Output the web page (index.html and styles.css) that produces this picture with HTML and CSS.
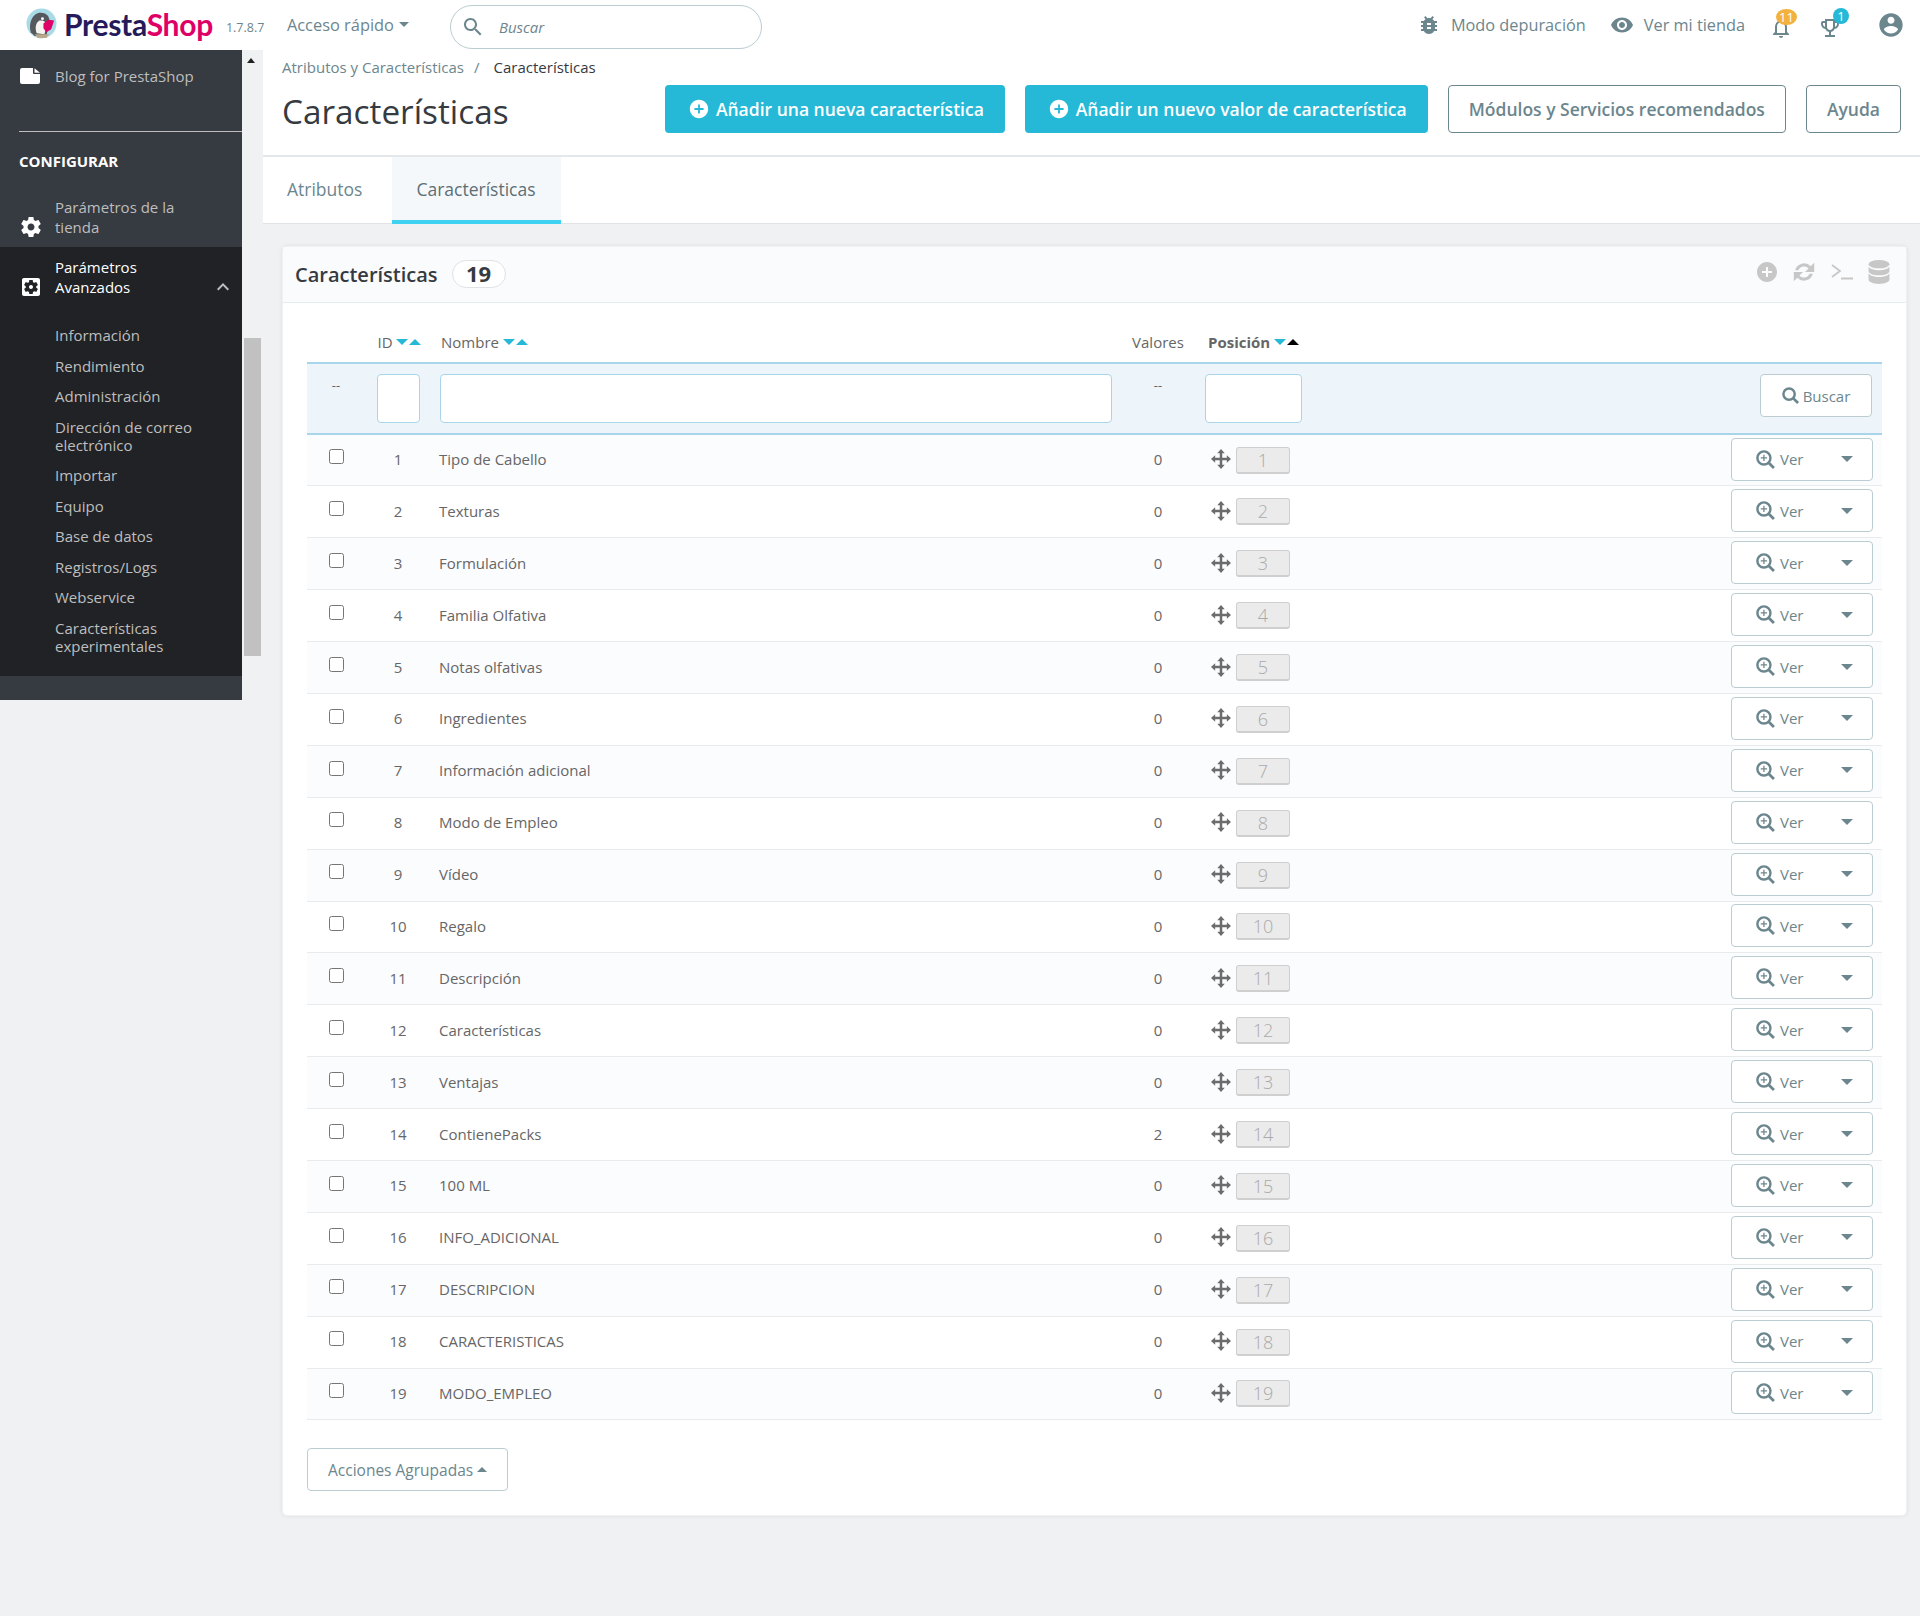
FILE: index.html
```html
<!DOCTYPE html>
<html lang="es">
<head>
    <meta charset="UTF-8">
    <title>Características • PrestaShop</title>
    <link rel="stylesheet" href="styles.css">
</head>
<body>
    <svg class="defs" width="0" height="0">
        <symbol id="i-file" viewBox="0 0 20 16"><path d="M2 0h11v5a1 1 0 0 0 1 1h6v8a2 2 0 0 1-2 2H2a2 2 0 0 1-2-2V2a2 2 0 0 1 2-2zM14.500 0.300L20 4.700h-5.500z"/></symbol>
        <symbol id="i-gear" viewBox="0 0 24 24"><path d="M19.43 12.98c.04-.32.07-.64.07-.98s-.03-.66-.07-.98l2.11-1.65c.19-.15.24-.42.12-.64l-2-3.46c-.12-.22-.39-.3-.61-.22l-2.49 1c-.52-.4-1.08-.73-1.69-.98l-.38-2.65C14.46 2.18 14.25 2 14 2h-4c-.25 0-.46.18-.49.42l-.38 2.65c-.61.25-1.17.59-1.69.98l-2.49-1c-.23-.09-.49 0-.61.22l-2 3.46c-.13.22-.07.49.12.64l2.11 1.65c-.04.32-.07.65-.07.98s.03.66.07.98l-2.11 1.65c-.19.15-.24.42-.12.64l2 3.46c.12.22.39.3.61.22l2.49-1c.52.4 1.08.73 1.69.98l.38 2.65c.03.24.24.42.49.42h4c.25 0 .46-.18.49-.42l.38-2.65c.61-.25 1.17-.59 1.69-.98l2.49 1c.23.09.49 0 .61-.22l2-3.46c.12-.22.07-.49-.12-.64l-2.11-1.65zM12 15.5c-1.93 0-3.5-1.57-3.5-3.5s1.57-3.5 3.5-3.5 3.5 1.57 3.5 3.5-1.57 3.5-3.5 3.5z"/></symbol>
        <symbol id="i-gearbox" viewBox="0 0 24 24"><path d="M12 10c-1.1 0-2 .9-2 2s.9 2 2 2 2-.9 2-2-.9-2-2-2zm7-7H5c-1.11 0-2 .9-2 2v14c0 1.1.89 2 2 2h14c1.11 0 2-.9 2-2V5c0-1.1-.89-2-2-2zm-1.75 9c0 .23-.02.46-.05.68l1.48 1.16c.13.11.17.3.08.45l-1.4 2.42c-.09.15-.27.21-.43.15l-1.74-.7c-.36.28-.76.51-1.18.69l-.26 1.85c-.03.17-.18.3-.35.3h-2.8c-.17 0-.32-.13-.35-.29l-.26-1.85c-.43-.18-.82-.41-1.18-.69l-1.74.7c-.16.06-.34 0-.43-.15l-1.4-2.42c-.09-.15-.05-.34.08-.45l1.48-1.16c-.03-.23-.05-.46-.05-.69 0-.23.02-.46.05-.68l-1.48-1.16c-.13-.11-.17-.3-.08-.45l1.4-2.42c.09-.15.27-.21.43-.15l1.74.7c.36-.28.76-.51 1.18-.69l.26-1.85c.03-.17.18-.3.35-.3h2.8c.17 0 .32.13.35.29l.26 1.85c.43.18.82.41 1.18.69l1.74-.7c.16-.06.34 0 .43.15l1.4 2.42c.09.15.05.34-.08.45l-1.48 1.16c.03.23.05.46.05.69z"/></symbol>
        <symbol id="i-search" viewBox="0 0 24 24"><path d="M15.5 14h-.79l-.28-.27C15.41 12.59 16 11.11 16 9.5 16 5.91 13.09 3 9.5 3S3 5.91 3 9.5 5.91 16 9.5 16c1.61 0 3.09-.59 4.23-1.57l.27.28v.79l5 4.99L20.49 19l-4.99-5zm-6 0C7.01 14 5 11.99 5 9.5S7.01 5 9.5 5 14 7.01 14 9.5 11.99 14 9.5 14z"/></symbol>
        <symbol id="i-mag" viewBox="0 0 18 18"><circle cx="7.500" cy="7.500" r="6" fill="none" stroke="currentColor" stroke-width="2.600"/><path d="M12 12l5 5" fill="none" stroke="currentColor" stroke-width="2.800"/></symbol>
        <symbol id="i-zoom" viewBox="0 0 18 18"><circle cx="7.500" cy="7.500" r="6.200" fill="none" stroke="currentColor" stroke-width="2.300"/><path d="M12 12l5 5" fill="none" stroke="currentColor" stroke-width="2.600"/><path d="M7.500 4.500v6M4.500 7.500h6" fill="none" stroke="currentColor" stroke-width="1.200"/></symbol>
        <symbol id="i-bug" viewBox="0 0 24 24"><path d="M20 8h-2.81c-.45-.78-1.07-1.45-1.82-1.96L17 4.41 15.59 3l-2.17 2.17C12.96 5.06 12.49 5 12 5c-.49 0-.96.06-1.41.17L8.41 3 7 4.41l1.62 1.63C7.88 6.55 7.26 7.22 6.81 8H4v2h2.09c-.05.33-.09.66-.09 1v1H4v2h2v1c0 .34.04.67.09 1H4v2h2.81c1.04 1.79 2.97 3 5.19 3s4.15-1.21 5.19-3H20v-2h-2.09c.05-.33.09-.66.09-1v-1h2v-2h-2v-1c0-.34-.04-.67-.09-1H20V8zm-6 8h-4v-2h4v2zm0-4h-4v-2h4v2z"/></symbol>
        <symbol id="i-eye" viewBox="0 0 24 24"><path d="M12 4.5C7 4.5 2.73 7.61 1 12c1.73 4.39 6 7.5 11 7.5s9.27-3.11 11-7.5c-1.73-4.39-6-7.5-11-7.5zM12 17c-2.76 0-5-2.24-5-5s2.24-5 5-5 5 2.24 5 5-2.24 5-5 5zm0-8c-1.66 0-3 1.34-3 3s1.34 3 3 3 3-1.34 3-3-1.34-3-3-3z"/></symbol>
        <symbol id="i-bell" viewBox="0 0 24 24"><path d="M12 22c1.1 0 2-.9 2-2h-4c0 1.1.9 2 2 2zm6-6v-5c0-3.07-1.63-5.64-4.5-6.32V4c0-.83-.67-1.5-1.5-1.5s-1.5.67-1.5 1.5v.68C7.64 5.36 6 7.92 6 11v5l-2 2v1h16v-1l-2-2zm-2 1H8v-6c0-2.48 1.51-4.5 4-4.5s4 2.02 4 4.5v6z"/></symbol>
        <symbol id="i-trophy" viewBox="0 0 24 24"><path d="M19 5h-2V3H7v2H5c-1.1 0-2 .9-2 2v1c0 2.55 1.92 4.63 4.39 4.94.63 1.5 1.98 2.63 3.61 2.96V19H7v2h10v-2h-4v-3.1c1.63-.33 2.98-1.46 3.61-2.96C19.08 12.63 21 10.55 21 8V7c0-1.1-.9-2-2-2zM5 8V7h2v3.82C5.84 10.4 5 9.3 5 8zm7 6c-1.65 0-3-1.35-3-3V5h6v6c0 1.65-1.35 3-3 3zm7-6c0 1.3-.84 2.4-2 2.82V7h2v1z"/></symbol>
        <symbol id="i-user" viewBox="0 0 24 24"><path d="M12 2C6.48 2 2 6.48 2 12s4.48 10 10 10 10-4.48 10-10S17.52 2 12 2zm0 3c1.66 0 3 1.34 3 3s-1.34 3-3 3-3-1.34-3-3 1.34-3 3-3zm0 14.2c-2.5 0-4.71-1.28-6-3.22.03-1.99 4-3.08 6-3.08 1.99 0 5.97 1.09 6 3.08-1.29 1.94-3.5 3.22-6 3.22z"/></symbol>
        <symbol id="i-add" viewBox="0 0 24 24"><path d="M12 2C6.48 2 2 6.48 2 12s4.48 10 10 10 10-4.48 10-10S17.52 2 12 2zm5 11h-4v4h-2v-4H7v-2h4V7h2v4h4v2z"/></symbol>
        <symbol id="i-move" viewBox="0 0 24 24"><path d="M12 0l4.500 5h-3v5.500H19v-3l5 4.500-5 4.500v-3h-5.500V19h3L12 24l-4.500-5h3v-5.500H5v3L0 12l5-4.500v3h5.500V5h-3z"/></symbol>
        <symbol id="i-chevron" viewBox="0 0 24 24"><path d="M12 8l-6 6 1.41 1.41L12 10.83l4.59 4.58L18 14z"/></symbol>
        <symbol id="i-refresh" viewBox="2 2 20 20"><path d="M4.6 10.5A7.7 7.7 0 0 1 17.6 7.2l2.9-2.9V12h-7.7l3-3a5 5 0 0 0-8.4 1.5zM19.4 13.5A7.7 7.7 0 0 1 6.4 16.8l-2.9 2.9V12h7.7l-3 3a5 5 0 0 0 8.4-1.5z"/></symbol>
        <symbol id="i-terminal" viewBox="0 0 24 24"><path d="M2 5l8 6-8 6M11 18.500h12" fill="none" stroke="currentColor" stroke-width="1.800"/></symbol>
        <symbol id="i-db" viewBox="0 0 20 23"><ellipse cx="10" cy="4" rx="10" ry="4"/><path d="M0 6.500c1.500 2.300 5.500 3.300 10 3.300s8.500-1 10-3.300v4.200c0 2.200-4.500 4-10 4s-10-1.800-10-4z"/><path d="M0 13c1.500 2.300 5.500 3.300 10 3.300s8.500-1 10-3.300v5.800c0 2.300-4.500 4.200-10 4.200s-10-1.900-10-4.200z"/></symbol>
    </svg>

    <header class="topbar">
        <svg class="logo-mark" viewBox="0 0 32 32">
            <circle cx="16" cy="16" r="15.500" fill="#a9dbe6"/>
            <path d="M5 25c-3-9 2-20 10-20 7 0 10 5 9 10l-3 14H9z" fill="#55585d"/>
            <path d="M11 26c-2-5-1-11 3-13 5-1 7 2 7 6l-2 8z" fill="#f5f3ef"/>
            <path d="M18 16l5-4 6 1-3 9-5 3-3-4z" fill="#df0067"/>
            <path d="M9 27h15l-3 4H12z" fill="#b9a88c"/>
            <circle cx="17" cy="11" r="1.500" fill="#fff"/>
        </svg>
        <span class="logo-text">Presta<span class="logo-pink">Shop</span></span>
        <span class="version">1.7.8.7</span>
        <span class="quick">Acceso rápido<i class="caret caret-down"></i></span>
        <div class="topsearch">
            <svg class="ico"><use href="#i-search"/></svg>
            <span>Buscar</span>
        </div>
        <div class="topright">
            <span class="toplink"><svg class="ico"><use href="#i-bug"/></svg>Modo depuración</span>
            <span class="toplink"><svg class="ico"><use href="#i-eye"/></svg>Ver mi tienda</span>
            <span class="notif notif-bell"><svg class="ico"><use href="#i-bell"/></svg><b class="badge badge-orange">11</b></span>
            <span class="notif notif-trophy"><svg class="ico"><use href="#i-trophy"/></svg><b class="badge badge-blue">1</b></span>
            <svg class="ico user"><use href="#i-user"/></svg>
        </div>
    </header>

    <div class="layout">
        <aside class="side">
            <nav class="menu">
                <a class="blog"><svg class="ico"><use href="#i-file"/></svg>Blog for PrestaShop</a>
                <div class="menu-title">CONFIGURAR</div>
                <a class="menu-item"><svg class="ico"><use href="#i-gear"/></svg><span>Parámetros de la tienda</span></a>
                <div class="menu-active">
                    <a class="menu-item current"><svg class="ico"><use href="#i-gearbox"/></svg><span>Parámetros Avanzados</span><svg class="chev"><use href="#i-chevron"/></svg></a>
                    <ul class="submenu">
                        <li>Información</li>
                        <li>Rendimiento</li>
                        <li>Administración</li>
                        <li>Dirección de correo electrónico</li>
                        <li>Importar</li>
                        <li>Equipo</li>
                        <li>Base de datos</li>
                        <li>Registros/Logs</li>
                        <li>Webservice</li>
                        <li>Características experimentales</li>
                    </ul>
                </div>
            </nav>
            <div class="scroll">
                <i class="caret caret-up"></i>
                <div class="thumb"></div>
            </div>
        </aside>

        <main class="main">
            <section class="head">
                <div class="crumbs"><span>Atributos y Características</span><em>/</em><strong>Características</strong></div>
                <div class="head-row">
                    <h1>Características</h1>
                    <div class="head-btns">
                        <a class="btn btn-primary"><svg class="ico"><use href="#i-add"/></svg>Añadir una nueva característica</a>
                        <a class="btn btn-primary"><svg class="ico"><use href="#i-add"/></svg>Añadir un nuevo valor de característica</a>
                        <a class="btn btn-outline">Módulos y Servicios recomendados</a>
                        <a class="btn btn-outline">Ayuda</a>
                    </div>
                </div>
            </section>
            <div class="tabs">
                <a class="tab">Atributos</a>
                <a class="tab active">Características</a>
            </div>

            <section class="card">
                <div class="card-head">
                    <span class="card-title">Características</span>
                    <span class="count">19</span>
                    <div class="card-tools">
                        <svg class="ico"><use href="#i-add"/></svg>
                        <svg class="ico"><use href="#i-refresh"/></svg>
                        <svg class="ico"><use href="#i-terminal"/></svg>
                        <svg class="ico"><use href="#i-db"/></svg>
                    </div>
                </div>
                <div class="card-body">
                    <table class="grid">
                        <colgroup>
                            <col class="c-check"><col class="c-id"><col class="c-name"><col class="c-val"><col class="c-pos"><col>
                        </colgroup>
                        <thead>
                            <tr class="titles">
                                <th></th>
                                <th class="id-head"><span class="sort">ID <i class="caret caret-down blue"></i><i class="caret caret-up blue"></i></span></th>
                                <th class="left"><span class="sort">Nombre <i class="caret caret-down blue"></i><i class="caret caret-up blue"></i></span></th>
                                <th>Valores</th>
                                <th class="left strong"><span class="sort">Posición <i class="caret caret-down blue"></i><i class="caret caret-up black"></i></span></th>
                                <th></th>
                            </tr>
                            <tr class="filters">
                                <th class="dash">--</th>
                                <th><input class="field f-id" type="text"></th>
                                <th class="left"><input class="field f-name" type="text"></th>
                                <th class="dash">--</th>
                                <th class="left"><input class="field f-pos" type="text"></th>
                                <th class="right"><a class="btn-search"><svg class="ico"><use href="#i-mag"/></svg>Buscar</a></th>
                            </tr>
                        </thead>
                        <tbody id="rows"></tbody>
                    </table>
                    <a class="bulk">Acciones Agrupadas<i class="caret caret-up"></i></a>
                </div>
            </section>
        </main>
    </div>

    <script>
        // filas de la tabla de características
        var names = ['Tipo de Cabello', 'Texturas', 'Formulación', 'Familia Olfativa', 'Notas olfativas',
            'Ingredientes', 'Información adicional', 'Modo de Empleo', 'Vídeo', 'Regalo', 'Descripción',
            'Características', 'Ventajas', 'ContienePacks', '100 ML', 'INFO_ADICIONAL', 'DESCRIPCION',
            'CARACTERISTICAS', 'MODO_EMPLEO'];
        var html = '';
        names.forEach(function (name, i) {
            var n = i + 1;
            html += '<tr>' +
                '<td><input class="check" type="checkbox"></td>' +
                '<td class="num">' + n + '</td>' +
                '<td class="name">' + name + '</td>' +
                '<td class="num">' + (n === 14 ? 2 : 0) + '</td>' +
                '<td><div class="pos"><svg class="ico"><use href="#i-move"/></svg><span class="pos-box">' + n + '</span></div></td>' +
                '<td class="right"><a class="btn-ver"><svg class="ico"><use href="#i-zoom"/></svg><span>Ver</span><i class="caret caret-down"></i></a></td>' +
                '</tr>';
        });
        document.getElementById('rows').innerHTML = html;
    </script>
</body>
</html>
```

FILE: styles.css
```css
* {
    box-sizing: border-box;
}
body {
    margin: 0;
    background-color: #eff1f2;
    font-family: "Open Sans", sans-serif;
    font-size: 15px;
    color: #6c868e;
    height: 1616px;
    overflow: hidden;
}
.defs {
    position: absolute;
}
.ico {
    width: 24px;
    height: 24px;
    fill: currentColor;
    flex: none;
}

/* carets */
.caret {
    display: inline-block;
    width: 0;
    height: 0;
    border-left: 5px solid transparent;
    border-right: 5px solid transparent;
}
.caret-down {
    border-top: 6px solid #6c868e;
}
.caret-up {
    border-bottom: 6px solid #6c868e;
}
.caret-down.blue {
    border-top-color: #25b9d7;
}
.caret-up.blue {
    border-bottom-color: #25b9d7;
}
.caret-up.black {
    border-bottom-color: #000;
}

/* top bar */
.topbar {
    height: 50px;
    background-color: #fff;
    display: flex;
    align-items: center;
    padding-left: 26px;
}
.logo-mark {
    width: 31px;
    height: 31px;
    margin: -3px 7px 0 0;
}
.logo-text {
    font-family: "Lato", sans-serif;
    font-size: 30px;
    font-weight: 700;
    color: #251b5b;
    letter-spacing: -0.300px;
    line-height: 50px;
    margin-top: -2px;
}
.logo-pink {
    color: #df0067;
}
.version {
    font-size: 12.500px;
    color: #6c868e;
    margin: 4px 0 0 13px;
    width: 61px;
    flex: none;
}
.quick {
    font-size: 16.400px;
    color: #6c868e;
    display: flex;
    align-items: center;
    width: 163px;
    flex: none;
    margin-top: -2px;
}
.quick .caret {
    margin-left: 5px;
    border-top-width: 5px;
}
.topsearch {
    width: 312px;
    height: 44px;
    margin-top: 4px;
    border: 1px solid #bbcdd2;
    border-radius: 22px;
    display: flex;
    align-items: center;
    padding-left: 10px;
    color: #6c868e;
}
.topsearch .ico {
    margin-right: 14px;
}
.topsearch span {
    font-style: italic;
}
.topright {
    margin-left: auto;
    display: flex;
    align-items: center;
    padding-right: 15px;
}
.toplink {
    display: flex;
    align-items: center;
    font-size: 16.300px;
    color: #6c868e;
    margin-right: 24px;
    margin-top: -1px;
}
.toplink .ico {
    margin-right: 10px;
}
.notif {
    position: relative;
    display: block;
    height: 24px;
    margin-top: 6px;
}
.notif-bell {
    margin-right: 25px;
}
.notif-trophy {
    margin-right: 35px;
}
.badge {
    position: absolute;
    border-radius: 50%;
    color: #fff;
    font-size: 13px;
    font-weight: 400;
    text-align: center;
}
.badge-orange {
    top: -7px;
    left: 7px;
    width: 21px;
    height: 16px;
    line-height: 16px;
    background-color: #f3b23e;
}
.badge-blue {
    top: -8px;
    left: 15px;
    width: 16px;
    height: 16px;
    line-height: 16px;
    background-color: #25b9d7;
}
.user {
    width: 28px;
    height: 28px;
}

/* layout */
.layout {
    display: flex;
    align-items: flex-start;
}
.side {
    display: flex;
    flex: none;
    width: 263px;
}
.menu {
    width: 242px;
    height: 650px;
    background-color: #363a41;
    color: #bebebe;
}
.menu a {
    display: flex;
}
.blog {
    height: 82px;
    padding: 14px 0 0 20px;
    align-items: flex-start;
    line-height: 24px;
    position: relative;
}
.blog::after {
    content: "";
    position: absolute;
    left: 19px;
    right: 0;
    bottom: 0;
    border-bottom: 1px solid #bebebe;
}
.blog .ico {
    color: #fff;
    width: 20px;
    height: 16px;
    margin: 4px 15px 0 0;
}
.menu-title {
    padding: 19px 0 0 19px;
    height: 64px;
    color: #fff;
    font-weight: 700;
    line-height: 20px;
}
.menu-item {
    padding: 0 0 0 19px;
    height: 51px;
    line-height: 20px;
    position: relative;
}
.menu-item .ico {
    align-self: flex-end;
    margin-right: 12px;
    margin-bottom: 8px;
    color: #fff;
}
.menu-item span {
    padding-top: 1px;
    width: 150px;
}
.menu-active {
    background-color: #202226;
    height: 429px;
    padding-top: 10px;
}
.current {
    height: 40px;
    color: #fff;
}
.current span {
    padding-top: 0;
}
.menu-active .current .ico {
    margin-bottom: -2px;
}
.chev {
    width: 24px;
    height: 24px;
    fill: #bebebe;
    position: absolute;
    right: 7px;
    top: 18px;
}
.submenu {
    list-style: none;
    margin: 0;
    padding: 29px 20px 0 55px;
}
.submenu li {
    line-height: 18px;
    margin-bottom: 12.500px;
    width: 150px;
}
.scroll {
    width: 21px;
    height: 606px;
    position: relative;
}
.scroll .caret {
    position: absolute;
    left: 5px;
    top: 8px;
    border-bottom-color: #222;
    border-left-width: 4px;
    border-right-width: 4px;
    border-bottom-width: 5px;
}
.thumb {
    position: absolute;
    top: 288px;
    left: 2px;
    width: 17px;
    height: 318px;
    background-color: #c1c1c1;
}

/* page head */
.main {
    flex: 1;
    min-width: 0;
}
.head {
    height: 107px;
    background-color: #fff;
    border-bottom: 2px solid #e4e8ea;
    padding: 7px 19px 0;
}
.crumbs {
    line-height: 20px;
    color: #6c868e;
    display: flex;
}
.crumbs em {
    font-style: normal;
    margin: 0 14px 0 10px;
    color: #6c868e;
}
.crumbs strong {
    font-weight: 400;
    color: #363a41;
}
.head-row {
    display: flex;
    justify-content: space-between;
    margin-top: 8px;
}
h1 {
    font-size: 33.300px;
    font-weight: 400;
    color: #363a41;
    margin: 6px 0 0;
    line-height: 40px;
}
.head-btns {
    display: flex;
    gap: 20px;
}
.btn {
    height: 48px;
    display: flex;
    align-items: center;
    font-size: 17.500px;
    font-weight: 600;
    border-radius: 4px;
    padding: 0 20px;
    white-space: nowrap;
}
.btn-primary {
    background-color: #25b9d7;
    color: #fff;
    padding: 0 21px 0 23px;
}
.btn-primary .ico {
    width: 22px;
    height: 22px;
    margin-right: 6px;
}
.btn-outline {
    border: 1px solid #6c868e;
    color: #6c868e;
    background-color: #fff;
}

/* tabs */
.tabs {
    height: 67px;
    background-color: #fff;
    border-bottom: 1px solid #dfe3e6;
    display: flex;
}
.tab {
    font-size: 17.500px;
    line-height: 64px;
    padding: 0 24px;
    color: #6c868e;
}
.tab.active {
    margin-left: 6px;
    padding-right: 25px;
    background-color: #f4f8fb;
    border-bottom: 4px solid #3ed2f0;
    height: 67px;
    color: #5d6f75;
}

/* card */
.card {
    margin: 22px 13px 0 19px;
    height: 1270px;
    background-color: #fff;
    border-radius: 5px;
    box-shadow: 0 0 4px rgba(0, 0, 0, 0.08);
    border: 1px solid #eef2f4;
}
.card-head {
    height: 56px;
    background-color: #fafbfc;
    border-bottom: 1px solid #e4eef2;
    display: flex;
    align-items: center;
    padding: 0 15px 0 12px;
}
.card-title {
    font-size: 20px;
    font-weight: 600;
    color: #363a41;
}
.count {
    margin: -2px 0 0 14px;
    height: 28px;
    width: 54px;
    border: 1px solid #dfe3e6;
    border-radius: 14px;
    background-color: #fff;
    font-size: 22px;
    font-weight: 700;
    color: #363a41;
    text-align: center;
    line-height: 25px;
}
.card-tools {
    margin-left: auto;
    display: flex;
    gap: 13.500px;
    color: #c7c7c7;
    margin-top: -6px;
}
.card-body {
    padding: 0 24px;
}

/* grid */
.grid {
    width: 1575px;
    border-collapse: collapse;
    table-layout: fixed;
    color: #666;
}
.c-check {
    width: 58px;
}
.c-id {
    width: 66px;
}
.c-name {
    width: 688px;
}
.c-val {
    width: 78px;
}
.c-pos {
    width: 112px;
}
.grid th {
    font-weight: 400;
    padding: 0;
    text-align: center;
}
.grid th.left {
    text-align: left;
}
.grid .right {
    text-align: right;
    padding-right: 10px;
}
.titles {
    height: 60px;
}
.titles th {
    padding-top: 18px;
}
.titles th.id-head {
    padding-left: 3px;
}
.titles th.left {
    padding-left: 10px;
}
.grid th.strong {
    font-weight: 700;
    padding-left: 11px;
}
.sort .caret {
    margin-left: 0;
    border-left-width: 6px;
    border-right-width: 6px;
    vertical-align: 3px;
}
.sort .caret-up {
    margin-left: 1px;
}
.filters {
    height: 71px;
    background-color: #edf5fb;
    border-top: 2px solid #a9d5ea;
    border-bottom: 2px solid #a9d5ea;
}
.grid .filters .dash {
    padding-top: 12px;
    font-size: 13px;
    line-height: 18px;
}
.field {
    height: 49px;
    display: inline-block;
    vertical-align: top;
    background-color: #fff;
    border: 1px solid #a9d5ea;
    border-radius: 4px;
    margin: 0;
    padding: 0;
}
.filters th {
    vertical-align: top;
}
.grid .filters th {
    padding-top: 10px;
}
.f-id {
    width: 43px;
}
.f-name {
    width: 672px;
    margin-left: 9px;
}
.f-pos {
    width: 97px;
    margin-left: 8px;
}
.btn-search {
    display: inline-flex;
    align-items: center;
    justify-content: center;
    width: 112px;
    height: 43px;
    border: 1px solid #bbcdd2;
    border-radius: 4px;
    background-color: #fff;
    color: #6c868e;
}
.btn-search .ico {
    width: 17px;
    height: 17px;
    margin-right: 4px;
}
#rows tr {
    height: 51.900px;
    border-bottom: 1px solid #e7ebed;
}
#rows tr:nth-child(odd) {
    background-color: #fbfcfe;
}
#rows td {
    padding: 0 0 2px;
    text-align: center;
    line-height: 20px;
}
#rows td.name {
    text-align: left;
    padding-left: 8px;
}
#rows td.right {
    text-align: right;
    padding-right: 9px;
}
.check {
    width: 15px;
    height: 15px;
    margin: 0 0 6px;
    vertical-align: middle;
}
.pos {
    display: flex;
    align-items: center;
    padding-left: 14px;
    color: #6c6c6c;
}
.pos .ico {
    width: 20px;
    height: 20px;
}
.pos-box {
    margin: 2px 0 0 5px;
    width: 54px;
    height: 27px;
    line-height: 25px;
    background-color: #ebebeb;
    border: 1px solid #cfcfcf;
    border-bottom-width: 2px;
    border-radius: 3px;
    color: #aaa;
    font-size: 18px;
    font-weight: 300;
}
.btn-ver {
    display: inline-flex;
    align-items: center;
    vertical-align: middle;
    width: 142px;
    height: 43px;
    border: 1px solid #bbcdd2;
    border-radius: 4px;
    background-color: #fff;
    color: #6c868e;
    padding-left: 24px;
}
.btn-ver .ico {
    width: 19px;
    height: 19px;
    margin-right: 5px;
}
.btn-ver .caret {
    margin-left: 37px;
    border-left-width: 6px;
    border-right-width: 6px;
}
.bulk {
    display: inline-flex;
    align-items: center;
    margin-top: 28px;
    height: 43px;
    padding: 0 20px;
    border: 1px solid #bbcdd2;
    border-radius: 4px;
    color: #6c868e;
    font-size: 15.500px;
}
.bulk .caret {
    margin-left: 4px;
    border-bottom-width: 5px;
}
```
